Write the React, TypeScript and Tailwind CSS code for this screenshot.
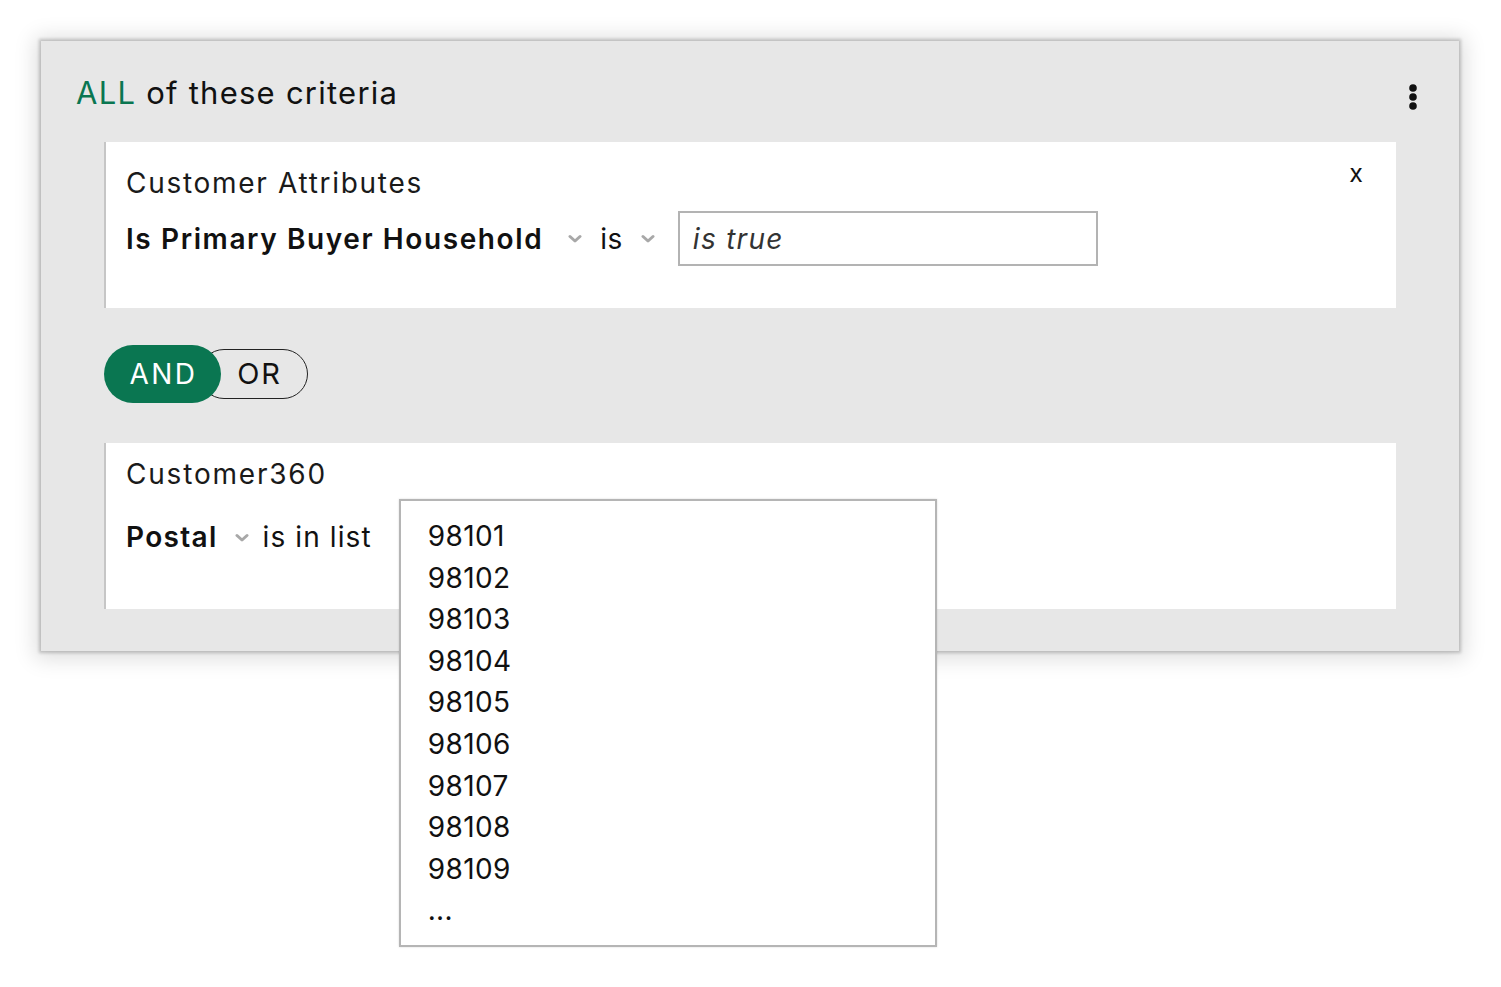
import React from "react";

const font = { fontFamily: "Inter, 'Noto Sans', sans-serif" };

function Chevron() {
  return (
    <svg width="14" height="10" viewBox="0 0 14 10" className="shrink-0">
      <polyline points="2,2.5 7,7 12,2.5" fill="none" stroke="#a8a8a8" strokeWidth="3" strokeLinecap="round" strokeLinejoin="round" />
    </svg>
  );
}

function Dots() {
  return (
    <svg width="10" height="28" viewBox="0 0 10 28">
      <circle cx="5" cy="5" r="3.8" fill="#111" />
      <circle cx="5" cy="14" r="3.8" fill="#111" />
      <circle cx="5" cy="23" r="3.8" fill="#111" />
    </svg>
  );
}

const zips = ["98101", "98102", "98103", "98104", "98105", "98106", "98107", "98108", "98109", "..."];

export default function App() {
  return (
    <div className="w-full h-[987px] bg-white pt-[41px] px-[41px]" style={font}>
      <div className="relative w-[1418px] h-[610px] bg-[#e7e7e7] shadow-[0_0_3px_2px_rgba(0,0,0,0.2),0_2px_20px_6px_rgba(0,0,0,0.13)] pt-[33px] pl-[35px] pr-[63px]">
        <div className="flex items-center justify-between h-[38px]">
          <div className="text-[31px] leading-[38px] text-[#111] tracking-[1.25px]">
            <span className="text-[#0a7651]">ALL</span> of these criteria
          </div>
          <div className="mr-[-22px] mt-[8px]">
            <Dots />
          </div>
        </div>

        <div className="ml-[28px] mt-[30px] h-[166px] bg-white border-l-2 border-[#c6c6c6] pl-[20px] pt-[24px] relative">
          <div className="text-[28px] leading-[34px] text-[#1a1a1a] tracking-[1.7px]">Customer Attributes</div>
          <div className="absolute right-[33px] top-[14px] text-[25px] leading-[34px] text-[#111]">x</div>
          <div className="flex items-center mt-[11px] h-[55px]">
            <span className="text-[28px] font-semibold text-[#111] tracking-[1.6px]">Is Primary Buyer Household</span>
            <span className="ml-[25px]"><Chevron /></span>
            <span className="ml-[18px] text-[28px] text-[#111] tracking-[0.5px]">is</span>
            <span className="ml-[18px]"><Chevron /></span>
            <div className="ml-[23px] w-[420px] h-[55px] border-2 border-[#b3b3b3] flex items-center pl-[13px]">
              <span className="text-[28px] italic text-[#333] tracking-[1.3px]">is true</span>
            </div>
          </div>
        </div>

        <div className="ml-[28px] mt-[37px] h-[58px] relative w-[205px]">
          <div className="absolute left-[95px] top-[4px] w-[109px] h-[50px] border border-[#222] rounded-full flex items-center justify-end pr-[25px]">
            <span className="text-[29px] text-[#111] tracking-[2px]">OR</span>
          </div>
          <div className="absolute left-0 top-0 w-[117px] h-[58px] bg-[#0a7651] rounded-full flex items-center justify-center pl-[2px]">
            <span className="text-[28px] text-white tracking-[2.5px]">AND</span>
          </div>
        </div>

        <div className="ml-[28px] mt-[40px] h-[166px] bg-white border-l-2 border-[#c6c6c6] pl-[20px] pt-[14px] relative">
          <div className="text-[28px] leading-[34px] text-[#1a1a1a] tracking-[1.8px]">Customer360</div>
          <div className="flex items-start mt-[25px]">
            <span className="text-[28px] leading-[42px] font-semibold text-[#111] tracking-[1.3px]">Postal</span>
            <span className="ml-[17px] mt-[17px]"><Chevron /></span>
            <span className="ml-[14px] text-[28px] leading-[42px] text-[#111] tracking-[1.1px]">is in list</span>
            <div className="relative ml-[27px]">
              <div className="absolute left-0 top-[-17px] w-[538px] bg-white border-2 border-[#b5b5b5] shadow-[0_0_2px_rgba(0,0,0,0.15)] pl-[27px] pt-[15px] pb-[13px] z-10">
                {zips.map((z) => (
                  <div key={z} className="text-[28px] leading-[41.6px] text-[#111] tracking-[0.4px]">{z}</div>
                ))}
              </div>
            </div>
          </div>
        </div>
      </div>
    </div>
  );
}
